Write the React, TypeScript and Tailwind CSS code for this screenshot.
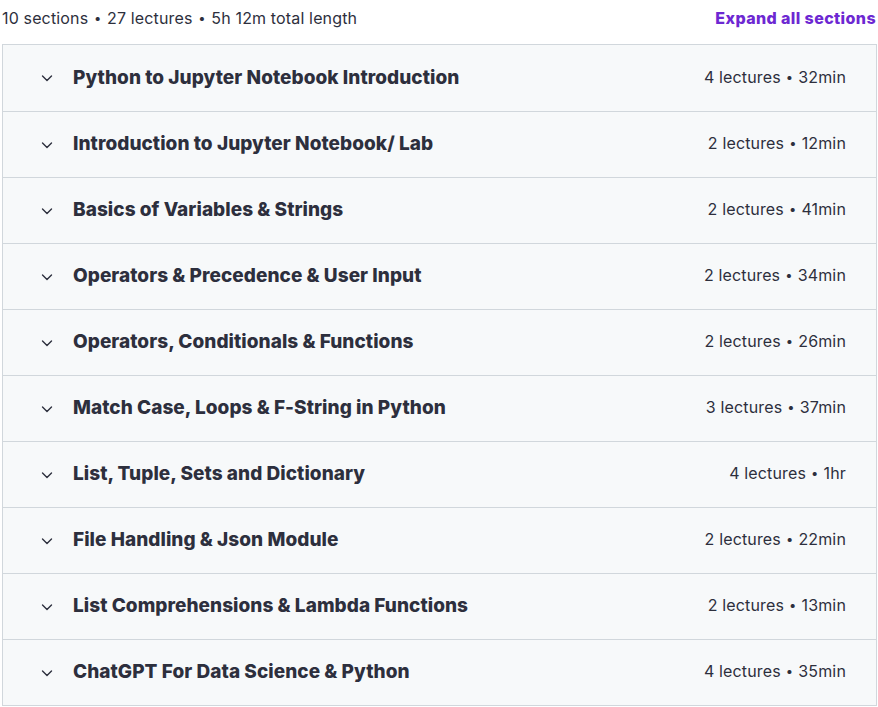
import React from "react";

const sections = [
  ["Python to Jupyter Notebook Introduction", "4 lectures • 32min"],
  ["Introduction to Jupyter Notebook/ Lab", "2 lectures • 12min"],
  ["Basics of Variables & Strings", "2 lectures • 41min"],
  ["Operators & Precedence & User Input", "2 lectures • 34min"],
  ["Operators, Conditionals & Functions", "2 lectures • 26min"],
  ["Match Case, Loops & F-String in Python", "3 lectures • 37min"],
  ["List, Tuple, Sets and Dictionary", "4 lectures • 1hr"],
  ["File Handling & Json Module", "2 lectures • 22min"],
  ["List Comprehensions & Lambda Functions", "2 lectures • 13min"],
  ["ChatGPT For Data Science & Python", "4 lectures • 35min"],
];

function Chevron() {
  return (
    <svg width="12" height="12" viewBox="0 0 12 12" fill="none" className="shrink-0">
      <path d="M1.5 4 L6 8.5 L10.5 4" stroke="#2d2f3d" strokeWidth="1.4" strokeLinecap="round" strokeLinejoin="round" />
    </svg>
  );
}

function Meta({ text }: { text: string }) {
  const [a, b] = text.split(" • ");
  return (
    <span className="text-[16px] tracking-[0.15px] text-[#2d2f3d] leading-none pb-[3px]">
      {a}
      <span className="text-[13px] mx-[5px] align-[1px]">•</span>
      {b}
    </span>
  );
}

export default function App() {
  return (
    <div className="w-[878px] h-[707px] bg-white text-[#2d2f3d] font-['Inter',sans-serif]">
      <div className="flex items-center justify-between h-[36px] pl-[2px] pr-[2px]">
        <span className="text-[16px] tracking-[0.15px]">
          10 sections <span className="text-[13px] mx-[1px] align-[1px]">•</span> 27 lectures{" "}
          <span className="text-[13px] mx-[1px] align-[1px]">•</span> 5h 12m total length
        </span>
        <span className="text-[16px] font-extrabold tracking-[0.4px] text-[#6d28d2]">Expand all sections</span>
      </div>
      <div className="mt-[8px] ml-[2px] w-[875px] border border-[#d1d7dc]">
        {sections.map(([title, meta], i) => (
          <div
            key={i}
            className={`flex items-center h-[66px] bg-[#f7f9fa] pl-[38px] pr-[30px] ${i > 0 ? "border-t border-[#d1d7dc]" : ""}`}
          >
            <Chevron />
            <span className="ml-[20px] flex-1 text-[19px] font-extrabold leading-none pb-[2px] tracking-[0.05px]">{title}</span>
            <Meta text={meta} />
          </div>
        ))}
      </div>
    </div>
  );
}
